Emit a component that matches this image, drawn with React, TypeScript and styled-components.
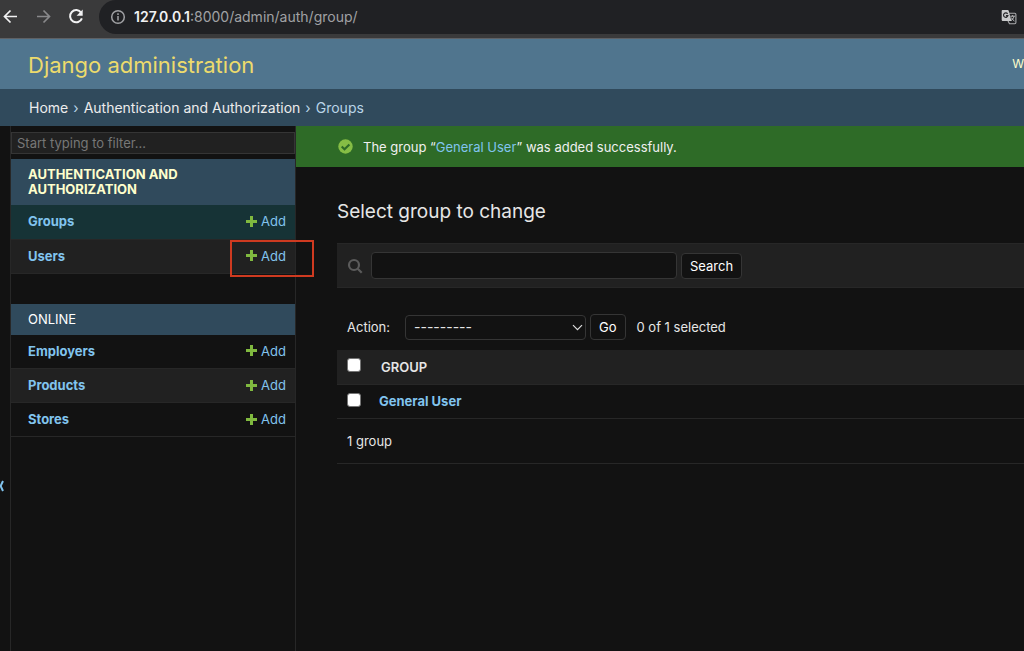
import React from "react";
import styled, { createGlobalStyle, css } from "styled-components";

const color = {
  body: "#121212",
  darkened: "#212121",
  hairline: "#272727",
  border: "#353535",
  primary: "#50758e",
  secondary: "#304a5c",
  link: "#81c4ee",
  text: "#e6e6e6",
  loud: "#ffffff",
  accent: "#eddb6c",
  cream: "#ffffcc",
  green: "#80b93f",
};

const GlobalStyle = createGlobalStyle`
  *, *::before, *::after { box-sizing: border-box; }
  html, body { margin: 0; background: ${color.body}; }
  body {
    color: ${color.text};
    font-family: Inter, "Liberation Sans", sans-serif;
    font-size: 13px;
    line-height: 18px;
    overflow: hidden;
  }
  button, input, select { font: inherit; color: inherit; }
  a { color: ${color.link}; text-decoration: none; }
`;

const Page = styled.div`
  display: flex;
  flex-direction: column;
  min-height: 100vh;
  overflow: hidden;
`;

const BrowserBar = styled.div`
  display: flex;
  align-items: flex-start;
  height: 39px;
  background: #3a3a3b;
  border-bottom: 1px solid #5e6165;
`;

const NavButtons = styled.nav`
  display: flex;
  gap: 16px;
  width: 99px;
  padding: 8px 0 0 2px;
`;

const IconButton = styled.button<{ $dim?: boolean }>`
  display: flex;
  padding: 0;
  border: 0;
  background: none;
  color: ${(p) => (p.$dim ? "#89898b" : "#f2f2f3")};
`;

const AddressBar = styled.div`
  display: flex;
  flex: 1;
  align-items: center;
  gap: 8px;
  height: 34px;
  padding: 0 7px 0 11px;
  border-radius: 17px 0 0 17px;
  background: #202124;
  color: #a0a1a4;
`;

const Url = styled.span`
  flex: 1;
  font-size: 14px;
  b { color: #f1f1f2; font-weight: 600; }
`;

const Header = styled.header`
  display: flex;
  align-items: center;
  justify-content: space-between;
  height: 50px;
  padding-left: 28px;
  background: ${color.primary};
`;

const Brand = styled.a`
  padding-top: 2px;
  color: ${color.accent};
  font-size: 22px;
  font-weight: 400;
  line-height: 28px;
`;

const UserTools = styled.div`
  color: ${color.cream};
  font-size: 12px;
`;

const Breadcrumbs = styled.nav`
  display: flex;
  align-items: center;
  gap: 5px;
  height: 37px;
  padding-left: 29px;
  background: ${color.secondary};
  color: #b9d5e8;
  font-size: 14px;
  a { color: #ececec; }
`;

const Body = styled.div`
  display: flex;
  flex: 1;
`;

const SidebarToggle = styled.button`
  display: flex;
  align-items: flex-start;
  justify-content: flex-end;
  flex: none;
  width: 11px;
  padding: 354px 6px 0 0;
  overflow: hidden;
  border: 0;
  border-right: 1px solid ${color.hairline};
  background: none;
  color: ${color.link};
  svg { flex: none; }
`;

const Sidebar = styled.aside`
  flex: none;
  width: 285px;
  padding-top: 6px;
  border-right: 1px solid ${color.hairline};
`;

const FilterInput = styled.input`
  display: block;
  width: 100%;
  height: 22px;
  margin-bottom: 5px;
  padding: 0 5px;
  border: 1px solid ${color.border};
  border-radius: 0;
  outline: 0;
  background: ${color.darkened};
  &::placeholder { color: #777; opacity: 1; }
`;

const Module = styled.table`
  width: 100%;
  margin-bottom: 30px;
  border-collapse: collapse;
`;

const Caption = styled.caption<{ $current?: boolean }>`
  padding: 8px 17px;
  background: ${color.secondary};
  line-height: 15px;
  text-align: left;
  text-transform: uppercase;
  a { color: ${color.loud}; }
  ${(p) =>
    p.$current &&
    css`
      padding-right: 80px;
      font-weight: 700;
      a { color: ${color.cream}; }
    `}
`;

const ModelRow = styled.tr<{ $tone?: "current" | "alt" }>`
  height: 34px;
  background: ${(p) =>
    p.$tone === "current" ? "#163336" : p.$tone === "alt" ? color.darkened : "transparent"};
  border-bottom: 1px solid ${color.hairline};
  th, td { padding: 0 9px 1px 17px; vertical-align: middle; }
  th { text-align: left; font-weight: 700; }
`;

const AddCell = styled.td`
  width: 90px;
`;

const AddLink = styled.a`
  position: relative;
  display: flex;
  align-items: center;
  justify-content: flex-end;
  gap: 4px;
`;

const Highlight = styled.span`
  position: absolute;
  inset: -7px -28px -12px auto;
  width: 84px;
  border: 2px solid #cf3a20;
  pointer-events: none;
`;

const Main = styled.div`
  flex: 1;
  min-width: 0;
`;

const Message = styled.p`
  display: flex;
  align-items: center;
  gap: 10px;
  height: 41px;
  margin: 0;
  padding: 0 0 0 42px;
  background: #2e6b27;
  color: #f0f0f0;
`;

const Content = styled.main`
  padding: 32px 0 0 41px;
`;

const Title = styled.h1`
  margin: 0 0 19px;
  font-size: 19px;
  font-weight: 400;
  line-height: 25px;
`;

const SearchForm = styled.form`
  display: flex;
  align-items: center;
  gap: 4px;
  height: 45px;
  padding-left: 10px;
  border-top: 1px solid ${color.hairline};
  border-bottom: 1px solid ${color.hairline};
  background: ${color.darkened};
  label { display: flex; width: 20px; }
`;

const SearchInput = styled.input`
  width: 306px;
  height: 27px;
  padding: 2px 6px;
  border: 1px solid ${color.border};
  border-radius: 4px;
  outline: 0;
  background: ${color.body};
`;

const Button = styled.button`
  height: 26px;
  padding: 0 8px;
  border: 1px solid ${color.border};
  border-radius: 4px;
  background: ${color.body};
  color: ${color.loud};
`;

const Actions = styled.form`
  display: flex;
  align-items: center;
  gap: 4px;
  height: 62px;
  padding: 16px 0 0 10px;
  label { width: 54px; }
  output { padding: 0 0 1px 7px; }
`;

const SelectWrap = styled.span`
  display: grid;
  align-items: center;
  width: 181px;
  > * { grid-area: 1 / 1; }
  svg { justify-self: end; margin-right: 3px; pointer-events: none; }
`;

const Select = styled.select`
  width: 100%;
  height: 25px;
  padding: 0 8px;
  appearance: none;
  border: 1px solid ${color.border};
  border-radius: 4px;
  background: ${color.body};
  font-size: 14px;
`;

const Results = styled.table`
  width: 100%;
  border-collapse: collapse;
  th, td { height: 34px; padding: 0; text-align: left; vertical-align: middle; }
  th { font-weight: 700; }
  tr > :first-child { width: 42px; padding: 0 0 3px 10px; }
  thead tr { background: ${color.darkened}; }
  thead th { font-weight: 600; }
  thead th:last-child { padding-left: 2px; }
  tr { border-bottom: 1px solid ${color.hairline}; }
`;

const Checkbox = styled.input`
  display: block;
  width: 14px;
  height: 14px;
  margin: 0;
  appearance: none;
  border: 1px solid #767676;
  border-radius: 3px;
  background: #fff;
`;

const Paginator = styled.p`
  margin: 0;
  padding: 13px 10px;
  border-bottom: 1px solid ${color.hairline};
`;

const BackIcon = () => (
  <svg width="17" height="17" viewBox="0 0 17 17" fill="none" stroke="currentColor" strokeWidth="1.7">
    <path d="M15 8.5H3M8.5 2.5l-6 6 6 6" />
  </svg>
);

const ForwardIcon = () => (
  <svg width="17" height="17" viewBox="0 0 17 17" fill="none" stroke="currentColor" strokeWidth="1.7">
    <path d="M2 8.5h12M8.5 2.5l6 6-6 6" />
  </svg>
);

const ReloadIcon = () => (
  <svg width="18" height="17" viewBox="0 0 18 17" fill="none" stroke="currentColor" strokeWidth="2">
    <path d="M13.2 4.7A6.1 6.1 0 1 0 13.9 10.3" />
    <path d="M14.7 1.6v6.2H8.6z" fill="currentColor" stroke="none" />
  </svg>
);

const InfoIcon = () => (
  <svg width="16" height="16" viewBox="0 0 16 16" fill="none" stroke="#a0a1a4" strokeWidth="1.5">
    <circle cx="8" cy="8" r="6.3" />
    <path d="M8 7v4.4M8 4.3v1.6" />
  </svg>
);

const TranslateIcon = () => (
  <svg width="16" height="16" viewBox="0 0 16 16" fill="none">
    <path d="M8 4.2h5.7c.7 0 1.2.5 1.2 1.2v8.2c0 .7-.5 1.2-1.2 1.2H8.5L7 12" stroke="#aaabad" strokeWidth="1.1" />
    <path d="M1.8 1h4.9c.5 0 .9.3 1 .8L10.4 12H1.8C1.2 12 .7 11.5.7 11V2c0-.6.5-1 1.1-1z" fill="#c9cacb" />
    <path d="M6.6 4.9A2.2 2.2 0 1 0 6.9 6.7H4.9" stroke="#26272a" strokeWidth="1.2" />
    <path d="M9.4 7.2h4.5M11.6 6.2v1M13 7.4c-.5 2-1.8 3.4-3 4.2M10.4 8.6c.6 1.3 1.7 2.5 3 3.4" stroke="#c0c1c3" />
  </svg>
);

const PlusIcon = () => (
  <svg width="11" height="11" viewBox="0 0 11 11">
    <path d="M5.5 0v11M0 5.5h11" stroke={color.green} strokeWidth="3" />
  </svg>
);

const CheckIcon = () => (
  <svg width="15" height="15" viewBox="0 0 15 15" fill="none">
    <circle cx="7.5" cy="7.5" r="7.2" fill="#86bd45" />
    <path d="M3.7 7.5l2.8 2.8 4.9-4.9" stroke="#2e6b27" strokeWidth="2.1" />
  </svg>
);

const SearchIcon = () => (
  <svg width="16" height="16" viewBox="0 0 16 16" fill="none" stroke="#5b5b5b" strokeWidth="2.2">
    <circle cx="7" cy="7" r="5" />
    <path d="M10.7 10.7l4 4" />
  </svg>
);

const SelectArrow = () => (
  <svg width="11" height="7" viewBox="0 0 11 7" fill="none" stroke="#dedede" strokeWidth="1.2">
    <path d="M1 1.2l4.5 4.5L10 1.2" />
  </svg>
);

const ToggleIcon = () => (
  <svg width="9" height="12" viewBox="0 0 9 12" fill="none" stroke="currentColor" strokeWidth="2">
    <path d="M4.4 1L1.2 6l3.2 5M8 1L5.6 6 8 11" />
  </svg>
);

type Model = { name: string; tone?: "current" | "alt"; highlighted?: boolean };
type AppGroup = { name: string; current?: boolean; models: Model[] };

const apps: AppGroup[] = [
  {
    name: "Authentication and Authorization",
    current: true,
    models: [
      { name: "Groups", tone: "current" },
      { name: "Users", tone: "alt", highlighted: true },
    ],
  },
  {
    name: "Online",
    models: [{ name: "Employers" }, { name: "Products", tone: "alt" }, { name: "Stores" }],
  },
];

export default function App() {
  return (
    <>
      <GlobalStyle />
      <Page>
        <BrowserBar>
          <NavButtons aria-label="Browser">
            <IconButton aria-label="Back"><BackIcon /></IconButton>
            <IconButton aria-label="Forward" $dim><ForwardIcon /></IconButton>
            <IconButton aria-label="Reload"><ReloadIcon /></IconButton>
          </NavButtons>
          <AddressBar>
            <InfoIcon />
            <Url><b>127.0.0.1</b>:8000/admin/auth/group/</Url>
            <IconButton aria-label="Translate this page"><TranslateIcon /></IconButton>
          </AddressBar>
        </BrowserBar>

        <Header>
          <Brand href="#">Django administration</Brand>
          <UserTools>W</UserTools>
        </Header>
        <Breadcrumbs aria-label="Breadcrumbs">
          <a href="#">Home</a>
          <span>›</span>
          <a href="#">Authentication and Authorization</a>
          <span>›</span>
          <span>Groups</span>
        </Breadcrumbs>

        <Body>
          <SidebarToggle aria-label="Toggle navigation"><ToggleIcon /></SidebarToggle>
          <Sidebar>
            <FilterInput placeholder="Start typing to filter..." aria-label="Filter navigation items" />
            {apps.map((app) => (
              <Module key={app.name}>
                <Caption $current={app.current}><a href="#">{app.name}</a></Caption>
                <tbody>
                  {app.models.map((model) => (
                    <ModelRow key={model.name} $tone={model.tone}>
                      <th scope="row"><a href="#">{model.name}</a></th>
                      <AddCell>
                        <AddLink href="#">
                          <PlusIcon />
                          Add
                          {model.highlighted && <Highlight />}
                        </AddLink>
                      </AddCell>
                    </ModelRow>
                  ))}
                </tbody>
              </Module>
            ))}
          </Sidebar>

          <Main>
            <Message>
              <CheckIcon />
              <span>The group “<a href="#">General User</a>” was added successfully.</span>
            </Message>
            <Content>
              <Title>Select group to change</Title>
              <SearchForm>
                <label htmlFor="searchbar"><SearchIcon /></label>
                <SearchInput id="searchbar" type="text" aria-label="Search groups" />
                <Button type="button">Search</Button>
              </SearchForm>
              <Actions>
                <label htmlFor="action">Action:</label>
                <SelectWrap>
                  <Select id="action"><option>---------</option></Select>
                  <SelectArrow />
                </SelectWrap>
                <Button type="button">Go</Button>
                <output>0 of 1 selected</output>
              </Actions>
              <Results>
                <thead>
                  <tr>
                    <th><Checkbox type="checkbox" aria-label="Select all groups" /></th>
                    <th scope="col">GROUP</th>
                  </tr>
                </thead>
                <tbody>
                  <tr>
                    <td><Checkbox type="checkbox" aria-label="Select General User" /></td>
                    <th scope="row"><a href="#">General User</a></th>
                  </tr>
                </tbody>
              </Results>
              <Paginator>1 group</Paginator>
            </Content>
          </Main>
        </Body>
      </Page>
    </>
  );
}
